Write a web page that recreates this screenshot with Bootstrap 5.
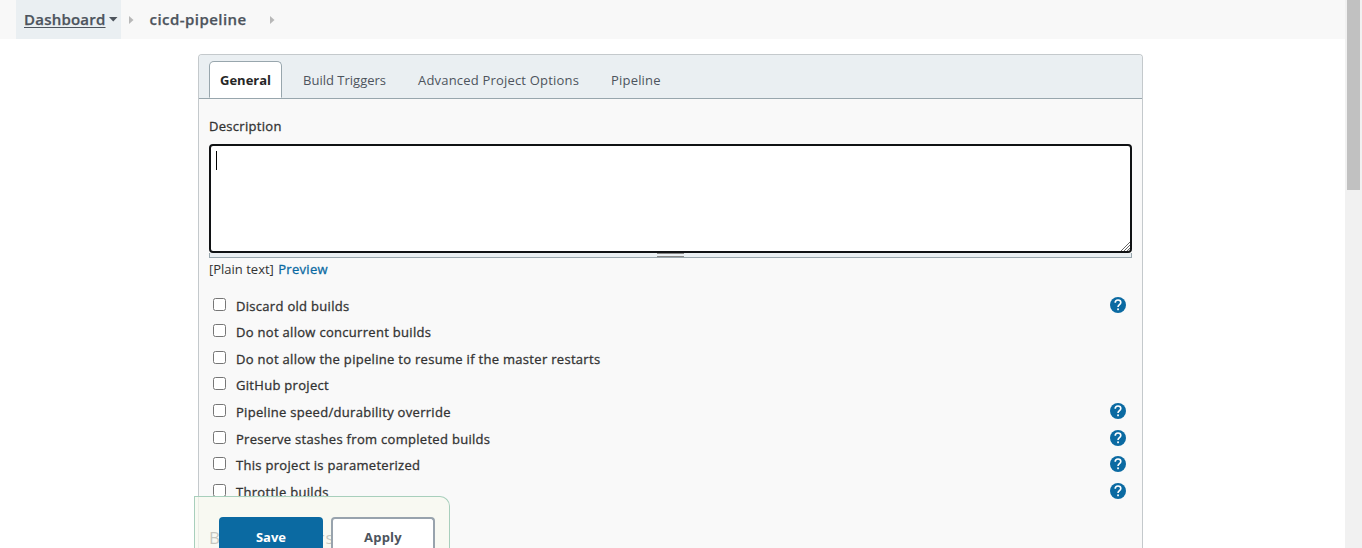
<!DOCTYPE html>
<html lang="en">
<head>
<meta charset="utf-8">
<title>cicd-pipeline Config</title>
<link href="https://cdn.jsdelivr.net/npm/bootstrap@5.3.0/dist/css/bootstrap.min.css" rel="stylesheet">
<style>
body{font-family:"Open Sans","Noto Sans",sans-serif;font-size:13px;line-height:20px;color:#333;height:548px}
.crumbs{height:39px;background:#f8f8f8;font-size:15px;font-weight:600;color:#4d545d;padding-left:16px}
.crumb-home{background:#eaeff2;width:105px;height:39px;padding-left:8px}
.crumb-home a{color:#4d545d;text-decoration:underline;text-underline-offset:2px;text-decoration-thickness:1px;letter-spacing:.22px}
.crumb-home a,.crumb-job{padding-bottom:2px;-webkit-text-stroke:.25px}
.crumb-home svg{margin-left:3px}
.crumb-job{margin-left:15.5px;width:97.5px;letter-spacing:.45px}
.arrow-first{margin-left:8px}
.arrow-last{margin-left:23px}
.scroll-track{width:17px;background:#f1f1f1;padding:0 2px}
.scroll-thumb{height:190px;background:#c1c1c1;width:13px}
.config{width:945px;height:494px;margin:15px 0 0 198px;border:1px solid #c4c9cc;border-bottom:0;border-radius:4px 4px 0 0;background:#f9f9f9}
.config .nav-tabs{height:44px;background:#eaeff2;border-bottom:1px solid #98a6ad;padding:6px 10px 0;border-radius:3px 3px 0 0;gap:10px}
.config .nav-link{height:37px;margin:0;padding:8px 10px;color:#4d545d;line-height:20px;border-radius:5px 5px 0 0;white-space:nowrap}
.config .nav-link.active{background:#fff;color:#262626;border-color:#98a6ad #98a6ad #fff;font-weight:700}
.config .tab-wide{letter-spacing:.19px}
.config-body{padding:0 10px}
.desc-label{margin-top:17px;height:28px}
.desc-box{height:109px;width:923px;border:2px solid #101214;border-radius:4px;padding:5px;background:#fff}
.caret{width:1px;height:19px;background:#000}
.grip{height:5px;width:923px;background:#eaeff2;border:1px solid #98a6ad;border-top:0}
.grip-bar{width:27px;height:4px;border:solid #888;border-width:1px 0}
.preview-row{height:20px;margin-top:1px}
.preview-row a{color:#0b6aa2;text-decoration:none;margin-left:1px}
.medium{letter-spacing:.3px;-webkit-text-stroke:.3px}
.options{margin-top:12.8px;padding:0 5px 0 4px}
.opt{height:26.6px}
.opt .form-check-input{width:13px;height:13px;margin:0 0 2px;border:1px solid #767676;border-radius:2.5px;background:#fff}
.opt label{margin-left:10px;padding-top:1px}
.opt svg{margin-bottom:0}
.section-title{font-size:17px;line-height:20px;letter-spacing:1.25px;color:#333;margin-top:23px;height:20px}
.savebar{left:194px;top:496px;width:256px;height:52px;background:rgba(247,248,239,.75);border:1px solid #a8cfbc;border-bottom:0;border-radius:0 10px 0 0;padding:20px 0 0 24px;gap:8px}
.savebar .btn{width:104px;height:31px;line-height:20px;font-size:13px;font-weight:700;border-width:2px;border-bottom:0;border-radius:4px 4px 0 0;padding:6px 0 0}
.btn-save{background:#0b6aa2;border-color:#0b6aa2;color:#fff}
.btn-apply{background:#fff;border-color:#98a3ad;color:#4d545d;letter-spacing:.2px}
</style>
</head>
<body class="d-flex overflow-hidden bg-white position-relative">
<main class="flex-grow-1">
  <nav class="crumbs d-flex align-items-center">
    <div class="crumb-home d-flex align-items-center">
      <a href="#">Dashboard</a>
      <svg width="9" height="5"><path d="M0 0h8.5L4.25 4.5z" fill="#4d545d"/></svg>
    </div>
    <svg class="arrow-first" width="5" height="8"><path d="M0 0l4.5 4L0 8z" fill="#b8b8b8"/></svg>
    <span class="crumb-job">cicd-pipeline</span>
    <svg class="arrow-last" width="5" height="8"><path d="M0 0l4.5 4L0 8z" fill="#b8b8b8"/></svg>
  </nav>
  <section class="config">
    <div class="nav nav-tabs flex-nowrap">
      <a class="nav-link active" href="#">General</a>
      <a class="nav-link" href="#">Build Triggers</a>
      <a class="nav-link tab-wide" href="#">Advanced Project Options</a>
      <a class="nav-link tab-wide" href="#">Pipeline</a>
    </div>
    <div class="config-body">
      <div class="desc-label medium">Description</div>
      <div class="desc-box position-relative"><div class="caret"></div>
        <svg class="position-absolute bottom-0 end-0" width="9" height="9"><path d="M0 9L9 0M3 9L9 3M6 9L9 6" stroke="#555" stroke-width=".9" fill="none"/></svg>
      </div>
      <div class="grip d-flex justify-content-center"><div class="grip-bar"></div></div>
      <div class="preview-row">[Plain text] <a class="medium" href="#">Preview</a></div>
      <div class="options" id="options"></div>
      <div class="section-title">Build Triggers</div>
    </div>
  </section>
</main>
<aside class="scroll-track"><div class="scroll-thumb"></div></aside>
<div class="savebar position-absolute d-flex">
  <button class="btn btn-save">Save</button>
  <button class="btn btn-apply">Apply</button>
</div>
<script>
const options=[["Discard old builds",1],["Do not allow concurrent builds",0],["Do not allow the pipeline to resume if the master restarts",0],["GitHub project",0],["Pipeline speed/durability override",1],["Preserve stashes from completed builds",1],["This project is parameterized",1],["Throttle builds",1]];
const help='<svg class="ms-auto" width="17" height="17" viewBox="0 0 17 17"><circle cx="8" cy="8" r="8" fill="#0b6aa2"/><path d="M5.2 5.8C5.2 4.1 6.4 3 8 3s2.8 1 2.8 2.5c0 2.1-2.8 2.2-2.8 4.5" fill="none" stroke="#fff" stroke-width="1.6"/><rect x="7.2" y="11.4" width="1.7" height="1.8" fill="#fff"/></svg>';
document.getElementById("options").innerHTML=options.map(([t,h],i)=>`<div class="opt d-flex align-items-center"><input class="form-check-input" type="checkbox" id="o${i}"><label class="medium" for="o${i}">${t}</label>${h?help:""}</div>`).join("");
</script>
<script src="https://cdn.jsdelivr.net/npm/bootstrap@5.3.0/dist/js/bootstrap.bundle.min.js"></script>
</body>
</html>
